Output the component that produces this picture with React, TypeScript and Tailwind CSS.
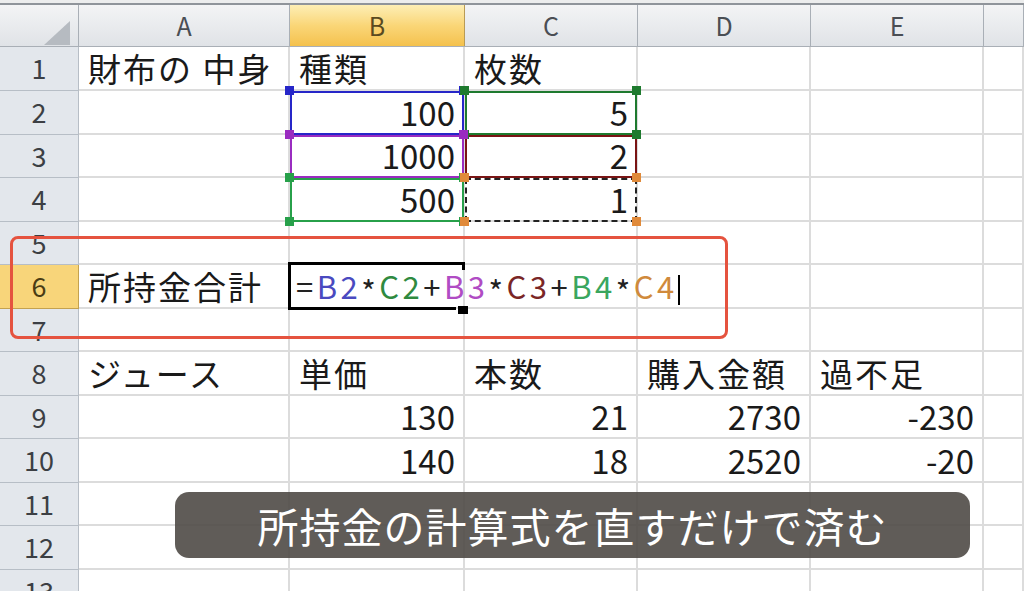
import React from 'react';

const COLS = ['A', 'B', 'C', 'D', 'E', ''];
const ROW_H = [44, 44, 43, 44, 43, 44, 43, 44, 43, 44, 43, 44, 43];

type Cell = { text?: string; right?: boolean };
type Row = Record<number, Cell>;

const DATA: Record<number, Row> = {
  1: { 0: { text: '財布の 中身' }, 1: { text: '種類' }, 2: { text: '枚数' } },
  2: { 1: { text: '100', right: true }, 2: { text: '5', right: true } },
  3: { 1: { text: '1000', right: true }, 2: { text: '2', right: true } },
  4: { 1: { text: '500', right: true }, 2: { text: '1', right: true } },
  6: { 0: { text: '所持金合計' } },
  8: {
    0: { text: 'ジュース' },
    1: { text: '単価' },
    2: { text: '本数' },
    3: { text: '購入金額' },
    4: { text: '過不足' },
  },
  9: {
    1: { text: '130', right: true },
    2: { text: '21', right: true },
    3: { text: '2730', right: true },
    4: { text: '-230', right: true },
  },
  10: {
    1: { text: '140', right: true },
    2: { text: '18', right: true },
    3: { text: '2520', right: true },
    4: { text: '-20', right: true },
  },
};

// range outline drawn over the sheet while editing the formula
function RangeBox({ left, top, w, h, color, dashed }: { left: number; top: number; w: number; h: number; color: string; dashed?: boolean }) {
  const handles = [
    [0, 0],
    [w, 0],
    [0, h],
    [w, h],
  ];
  return (
    <div className="absolute" style={{ left, top, width: w, height: h }}>
      <div
        className={`absolute inset-0 border-2 ${dashed ? 'border-dashed' : 'border-solid'}`}
        style={{ borderColor: dashed ? '#222' : color }}
      />
      {handles.map(([x, y], i) => (
        <div key={i} className="absolute w-[9px] h-[9px]" style={{ left: x - 5, top: y - 5, background: color }} />
      ))}
    </div>
  );
}

function Star() {
  return <span className="inline-block translate-y-[5px] text-[#222]">*</span>;
}

export default function App() {
  return (
    <div className="relative w-[1024px] h-[591px] overflow-hidden bg-white font-['Noto_Sans_CJK_JP',sans-serif] text-[#1a1a1a]">
      {/* top strip */}
      <div className="h-[5px] bg-[#eceded] border-b-2 border-[#8f949a]" />

      {/* column headers */}
      <div className="grid grid-cols-[79px_211px_175px_173px_173px_173px_40px] h-[42px] border-b border-[#a9afb6]">
        <div className="relative bg-gradient-to-b from-[#f3f4f5] to-[#e0e3e7] border-r border-[#a9afb6]">
          <svg className="absolute left-[44px] top-[16px]" width="26" height="24" viewBox="0 0 26 24">
            <polygon points="26,0 26,24 0,24" fill="#b6bbc1" />
          </svg>
        </div>
        {COLS.map((c, i) => (
          <div
            key={i}
            className={`flex items-center justify-center text-[25px] border-r ${
              c === 'B'
                ? 'bg-gradient-to-b from-[#fdeeb4] via-[#fad677] to-[#f4c14c] border-[#b99b55] text-[#5a4a20]'
                : 'bg-gradient-to-b from-[#f3f4f5] to-[#e0e3e7] border-[#a9afb6] text-[#4a4e54]'
            }`}
          >
            {c}
          </div>
        ))}
      </div>

      {/* rows */}
      {ROW_H.map((h, r) => {
        const n = r + 1;
        const row = DATA[n] || {};
        const sel = n === 6;
        return (
          <div key={n} className="grid grid-cols-[79px_211px_175px_173px_173px_173px_40px]" style={{ height: h }}>
            <div
              className={`flex items-center justify-center text-[27px] border-r border-b ${
                sel ? 'bg-[#f8d57a] border-[#c4a24f] text-[#4a3c14]' : 'bg-[#e3e7ec] border-[#b7bec6] text-[#3c3f44]'
              }`}
            >
              {n}
            </div>
            {COLS.map((_, ci) => {
              const cell = row[ci];
              return (
                <div
                  key={ci}
                  className={`flex items-center whitespace-nowrap text-[33px] leading-none border-r-2 border-b-2 border-[#dcdcdc] ${
                    cell?.right ? 'justify-end pr-[8px]' : 'pl-[9px] tracking-[2px]'
                  }`}
                >
                  {cell?.text}
                  {n === 6 && ci === 1 && (
                    <span className="relative z-10 -ml-[3px] text-[31px] pt-[3px] tracking-[3.5px]">
                      <span className="text-[#222]">=</span>
                      <span className="text-[#4a4ac0]">B2</span>
                      <Star />
                      <span className="text-[#2f8a40]">C2</span>
                      <span className="text-[#222]">+</span>
                      <span className="text-[#b04cc4]">B3</span>
                      <Star />
                      <span className="text-[#7a2626]">C3</span>
                      <span className="text-[#222]">+</span>
                      <span className="text-[#3aa65e]">B4</span>
                      <Star />
                      <span className="text-[#d08a3c]">C4</span>
                      <span className="inline-block w-[2px] h-[30px] bg-black align-middle" />
                    </span>
                  )}
                </div>
              );
            })}
          </div>
        );
      })}

      {/* formula range outlines */}
      <RangeBox left={465} top={135} w={172} h={43} color="#7a1414" />
      <RangeBox left={290} top={91} w={174} h={44} color="#2626c8" />
      <RangeBox left={465} top={91} w={172} h={44} color="#1e7a2e" />
      <RangeBox left={290} top={135} w={174} h={43} color="#9a2cc0" />
      <RangeBox left={290} top={178} w={174} h={44} color="#27a04a" />
      <RangeBox left={465} top={178} w={172} h={44} color="#e08a3a" dashed />

      {/* active cell B6 */}
      <div className="absolute left-[288px] top-[262px] w-[177px] h-[48px] border-t-[3px] border-l-[3px] border-black" />
      <div className="absolute left-[462px] top-[262px] w-[3px] h-[8px] bg-black" />
      <div className="absolute left-[288px] top-[307px] w-[168px] h-[3px] bg-black" />
      <div className="absolute left-[458px] top-[306px] w-[10px] h-[8px] bg-black" />

      {/* annotation box */}
      <div className="absolute left-[10px] top-[236px] w-[718px] h-[103px] border-[3px] border-[#e5533f] rounded-[8px]" />

      {/* subtitle */}
      <div className="absolute left-[175px] top-[492px] w-[795px] h-[66px] rounded-[14px] bg-[#4f4a46]/90 flex items-center justify-center">
        <span className="text-white text-[41px] leading-none tracking-[1px]">所持金の計算式を直すだけで済む</span>
      </div>
    </div>
  );
}
